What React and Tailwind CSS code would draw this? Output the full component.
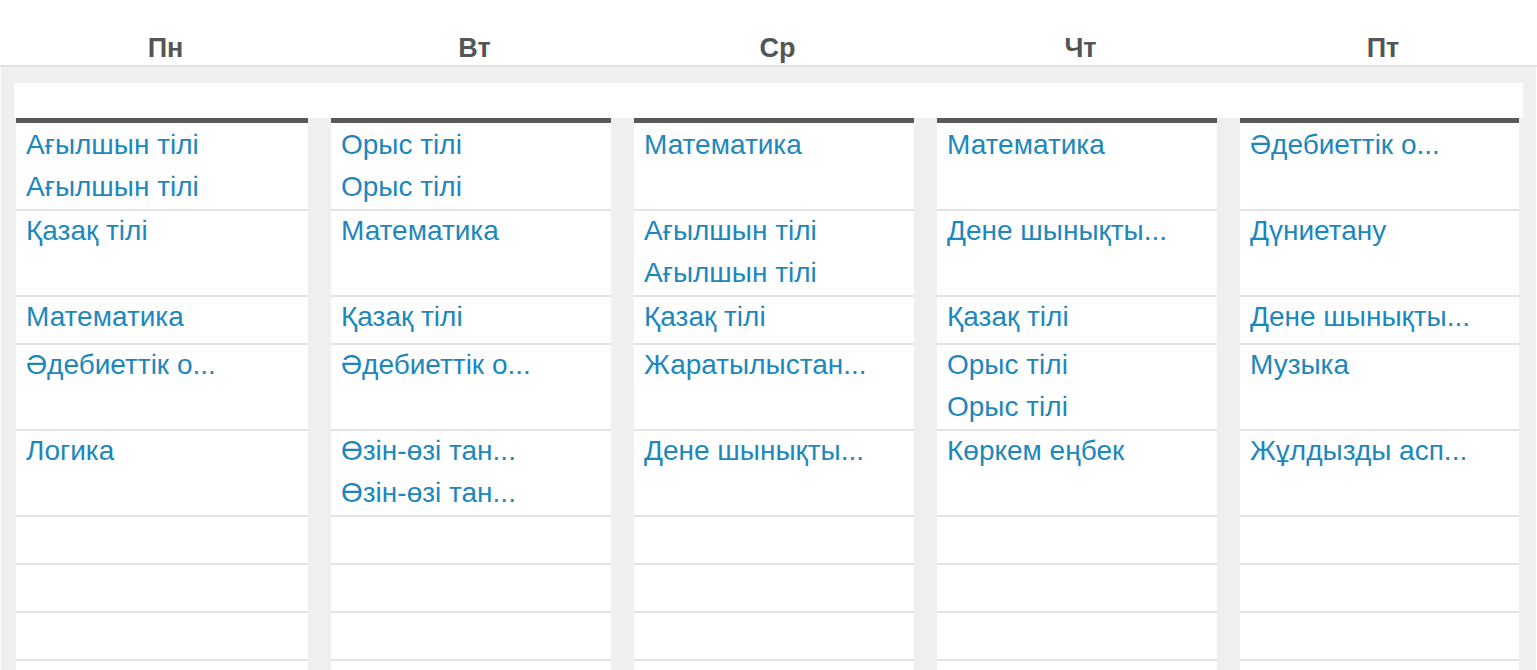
import React from 'react';

const days = ['Пн', 'Вт', 'Ср', 'Чт', 'Пт'];

// each row: one entry per day, each entry a list of lessons
const rows = [
  [['Ағылшын тілі', 'Ағылшын тілі'], ['Орыс тілі', 'Орыс тілі'], ['Математика'], ['Математика'], ['Әдебиеттік о...']],
  [['Қазақ тілі'], ['Математика'], ['Ағылшын тілі', 'Ағылшын тілі'], ['Дене шынықты...'], ['Дүниетану']],
  [['Математика'], ['Қазақ тілі'], ['Қазақ тілі'], ['Қазақ тілі'], ['Дене шынықты...']],
  [['Әдебиеттік о...'], ['Әдебиеттік о...'], ['Жаратылыстан...'], ['Орыс тілі', 'Орыс тілі'], ['Музыка']],
  [['Логика'], ['Өзін-өзі тан...', 'Өзін-өзі тан...'], ['Дене шынықты...'], ['Көркем еңбек'], ['Жұлдызды асп...']],
  [[], [], [], [], []],
  [[], [], [], [], []],
  [[], [], [], [], []],
  [[], [], [], [], []],
];

const cols = 'grid grid-cols-[292px_280px_280px_280px_279px] gap-x-[23px]';

const App = () => {
  return (
    <div className="h-[670px] w-full overflow-hidden bg-white font-['Liberation_Sans',Arial,sans-serif]">
      <div className="h-[67px] border-b-2 border-[#e2e2e2] pl-[15px]">
        <div className={cols}>
          {days.map((d) => (
            <div key={d} className="h-[65px] pl-[9px] pt-[30px] text-center text-[27px] font-bold leading-[36px] text-[#555555]">
              {d}
            </div>
          ))}
        </div>
      </div>

      <div className="h-full bg-[#efefef] pl-[13px] pr-[13px] pt-[16px] ml-px mr-px">
        <div className="h-[35px] bg-white" />
        <div className={`${cols} pl-[2px]`}>
          {days.map((d) => (
            <div key={d} className="h-[7px] border-t-[5px] border-[#595959] bg-white" />
          ))}
          {rows.map((row, i) =>
            row.map((cell, j) => (
              <div key={`${i}-${j}`} className="min-h-[48px] border-b-2 border-[#e3e3e3] bg-white px-[10px]">
                {cell.map((lesson, k) => (
                  <div key={k} className="h-[42px] text-[28px] leading-[40px] text-[#1c87bd] whitespace-nowrap">
                    {lesson}
                  </div>
                ))}
              </div>
            ))
          )}
        </div>
      </div>
    </div>
  );
};

export default App;
